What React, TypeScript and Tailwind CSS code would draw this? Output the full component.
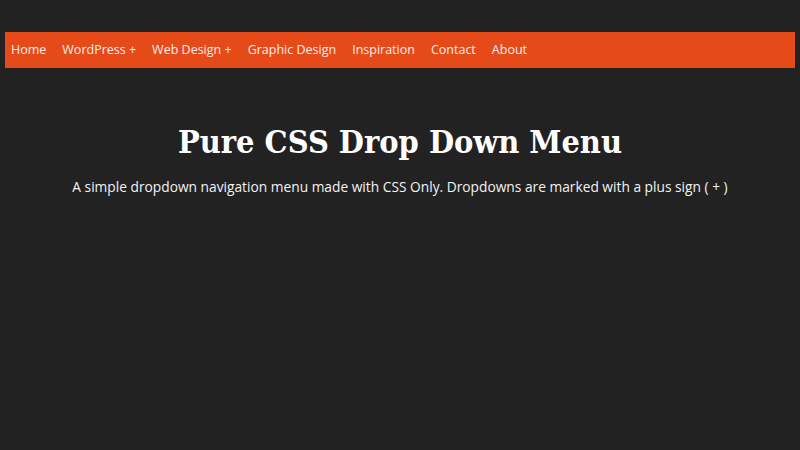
const links = [
  "Home",
  "WordPress +",
  "Web Design +",
  "Graphic Design",
  "Inspiration",
  "Contact",
  "About",
];

export default function App() {
  return (
    <div className="min-h-[450px] w-full bg-[#222222] px-[5px] pt-[32px] font-['Open_Sans',sans-serif]">
      <nav className="h-[36px] bg-[#e64a19]">
        <ul className="flex h-full items-center gap-[16px] pl-[6px]">
          {links.map((l) => (
            <li key={l} className="text-[12.5px] text-[#fbeee8]">
              {l}
            </li>
          ))}
        </ul>
      </nav>
      <header className="mt-[50px] text-center">
        <h1 className="font-['DejaVu_Serif_Condensed','DejaVu_Serif',serif] text-[32.2px] leading-[48px] font-bold text-white">
          Pure CSS Drop Down Menu
        </h1>
        <p className="mt-[11px] text-[13.75px] text-[#f2f2f2]">
          A simple dropdown navigation menu made with CSS Only. Dropdowns are marked with a plus sign ( + )
        </p>
      </header>
    </div>
  );
}
